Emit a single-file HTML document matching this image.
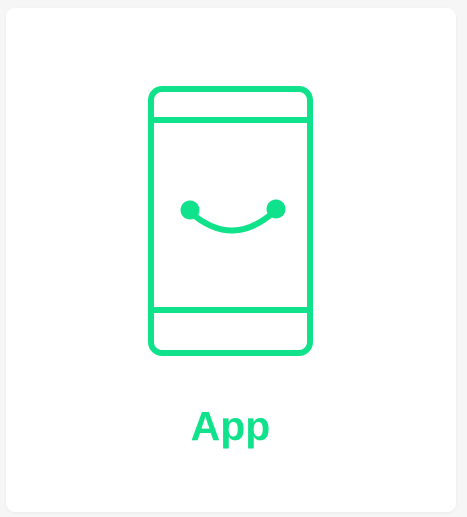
<!DOCTYPE html>
<html><head><style>
html,body{margin:0;padding:0;width:467px;height:517px;background:#f6f6f7;overflow:hidden}
.card{position:absolute;left:6px;top:8px;width:450px;height:504px;background:#fff;border-radius:9px;box-shadow:0 1px 3px rgba(0,0,0,0.05)}
.t{position:absolute;left:-3px;width:467px;top:401px;text-align:center;font-family:"Liberation Sans",sans-serif;font-weight:bold;font-size:41px;color:#10e28b;line-height:50px}
</style></head><body>
<div class="card"></div>
<svg style="position:absolute;left:0;top:0" width="467" height="517">
<g fill="none" stroke="#10e28b" stroke-width="6">
<rect x="151" y="89" width="159" height="264" rx="11"/>
<line x1="151" y1="120" x2="310" y2="120"/>
<line x1="151" y1="310" x2="310" y2="310"/>
<path d="M190 212 Q233 250 276 210" stroke-linecap="round"/>
</g>
<circle cx="190" cy="210" r="9.5" fill="#10e28b"/>
<circle cx="276" cy="209" r="9.5" fill="#10e28b"/>
</svg>
<div class="t">App</div>
</body></html>
